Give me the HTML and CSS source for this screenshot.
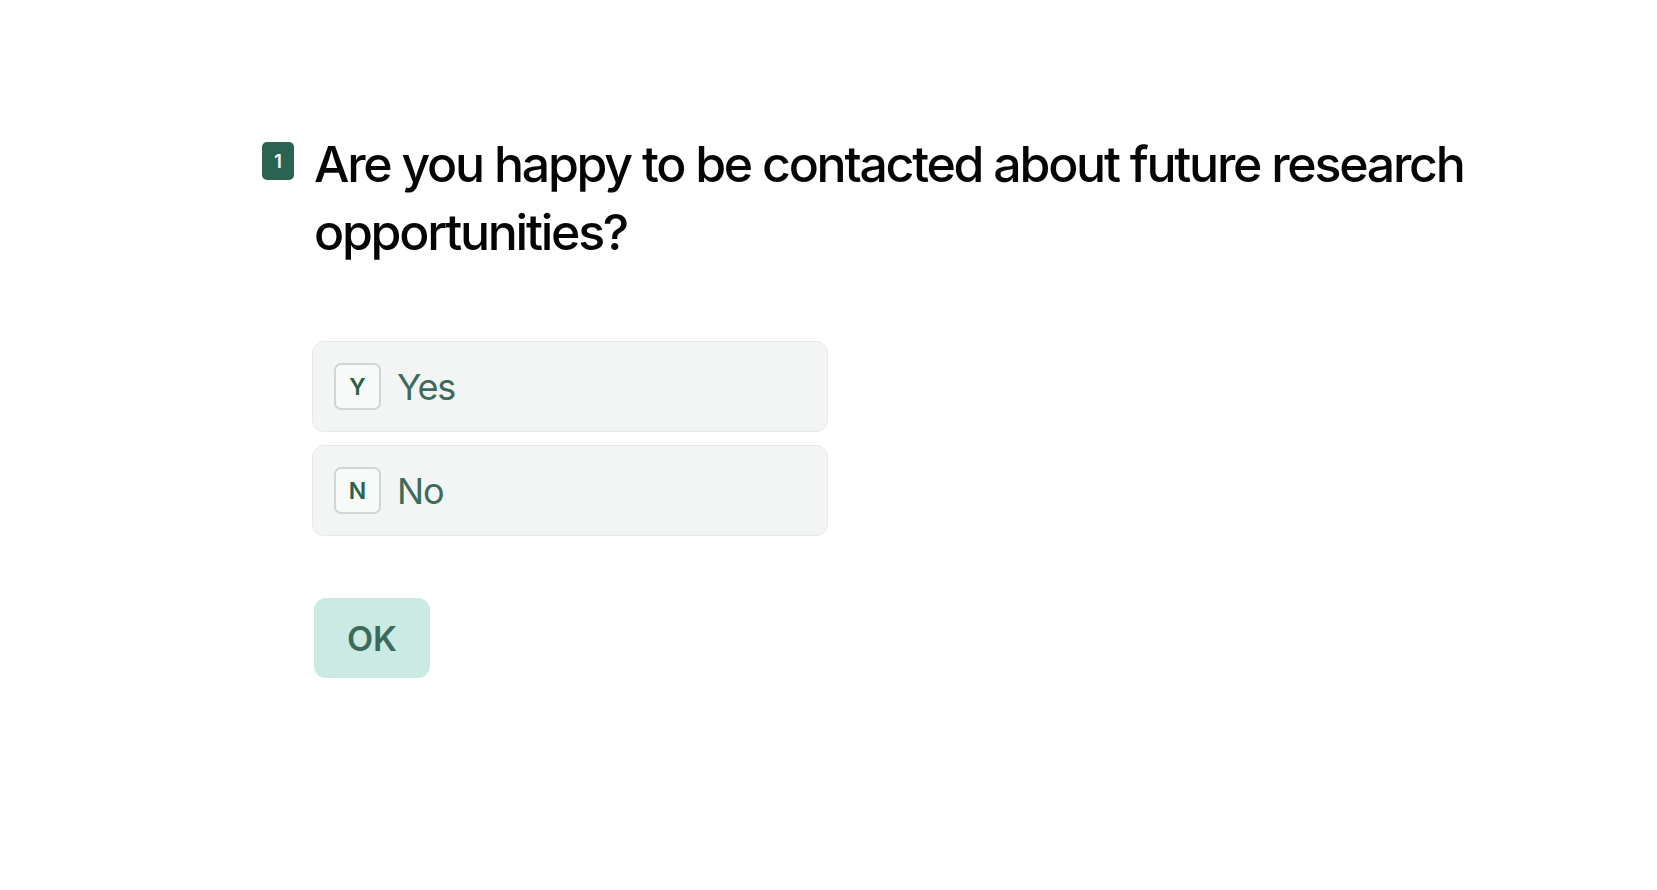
FILE: index.html
```html
<!DOCTYPE html>
<html lang="en">
<head>
<meta charset="utf-8">
<title>Question</title>
<link rel="stylesheet" href="styles.css">
</head>
<body>
<main class="page">
  <div class="question">
    <div class="badge">1</div>
    <div class="content">
      <h1 class="title">Are you happy to be contacted about future research opportunities?</h1>
      <div class="options">
        <div class="option"><span class="key">Y</span><span class="label">Yes</span></div>
        <div class="option"><span class="key">N</span><span class="label">No</span></div>
      </div>
      <button class="ok">OK</button>
    </div>
  </div>
</main>
</body>
</html>
```
FILE: styles.css
```css
html, body {
  margin: 0;
  padding: 0;
  background: #ffffff;
  font-family: Inter, "Noto Sans", sans-serif;
}
.page {
  padding: 130px 0 0 262px;
}
.question {
  display: flex;
  align-items: flex-start;
  gap: 20px;
}
.badge {
  margin-top: 12px;
  width: 32px;
  height: 38px;
  border-radius: 5px;
  background: #2b6352;
  color: #ffffff;
  font-size: 18px;
  font-weight: 600;
  display: flex;
  align-items: center;
  justify-content: center;
  flex: none;
}
.content {
  display: flex;
  flex-direction: column;
  align-items: flex-start;
}
.title {
  margin: 0;
  font-size: 50px;
  font-weight: 500;
  line-height: 68px;
  letter-spacing: -2.25px;
  color: #050505;
  width: 1200px;
}
.options {
  margin-top: 75px;
  margin-left: -2px;
  display: flex;
  flex-direction: column;
  gap: 13px;
}
.option {
  box-sizing: border-box;
  width: 516px;
  height: 91px;
  padding: 0 21px;
  border: 1.5px solid #e5e8e7;
  border-radius: 12px;
  background: #f3f5f4;
  display: flex;
  align-items: center;
  gap: 16px;
}
.key {
  box-sizing: border-box;
  width: 47px;
  height: 47px;
  border: 2px solid #cfd6d3;
  border-radius: 7px;
  background: #f8faf9;
  color: #2b5e4d;
  font-size: 23px;
  font-weight: 600;
  display: flex;
  align-items: center;
  justify-content: center;
}
.label {
  font-size: 36px;
  letter-spacing: -1.2px;
  color: #3d6b5b;
  font-weight: 400;
}
.ok {
  margin-top: 62px;
  width: 116px;
  height: 80px;
  border: none;
  border-radius: 12px;
  background: #cbeae3;
  color: #3b6b5b;
  font-family: Inter, "Noto Sans", sans-serif;
  font-size: 34px;
  font-weight: 600;
  padding: 0;
}
```
